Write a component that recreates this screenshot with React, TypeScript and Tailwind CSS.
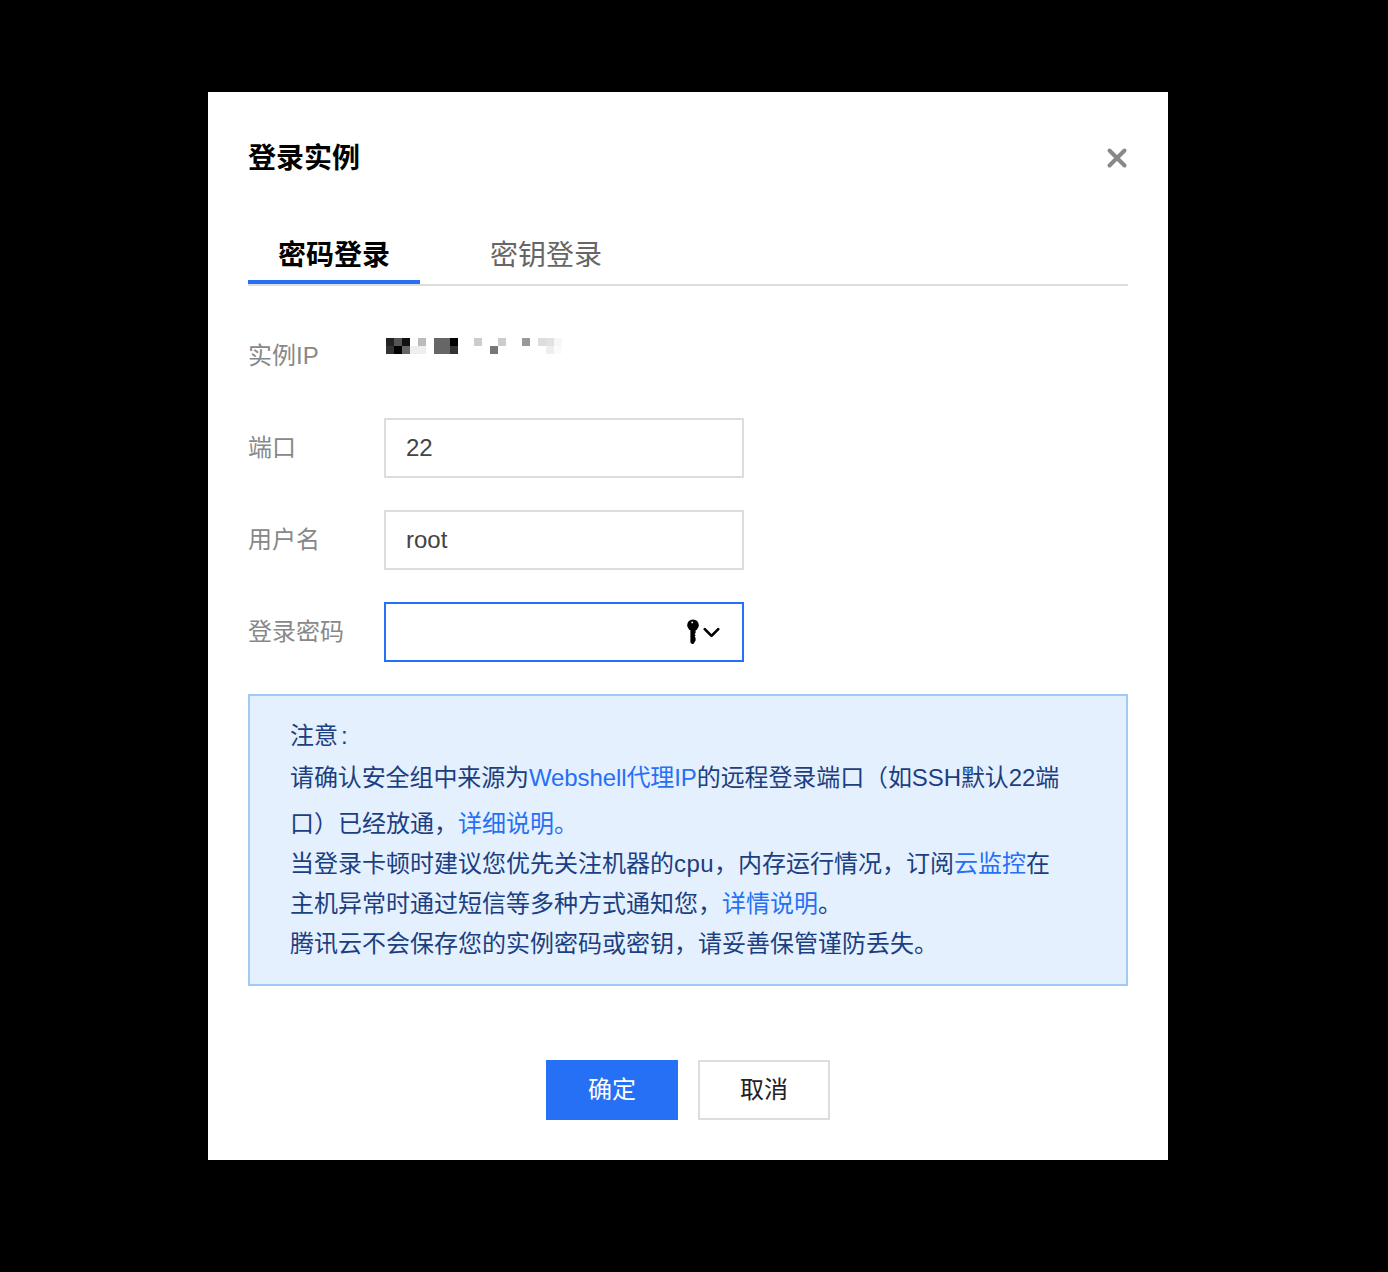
import { ChevronDown, X } from 'lucide-react';

const FONT = '[font-family:"Liberation_Sans","Noto_Sans_CJK_SC",sans-serif]';

const mosaic: [number, number, string][] = [
  [0, 0, '#222222'], [8, 0, '#555555'], [16, 0, '#111111'], [32, 0, '#bbbbbb'],
  [0, 8, '#333333'], [8, 8, '#000000'], [16, 8, '#666666'], [24, 8, '#eeeeee'], [32, 8, '#eeeeee'],
  [48, 0, '#666666'], [56, 0, '#666666'], [64, 0, '#000000'],
  [48, 8, '#666666'], [56, 8, '#666666'], [64, 8, '#333333'],
  [88, 0, '#cccccc'], [104, 8, '#777777'], [112, 0, '#cccccc'],
  [136, 0, '#999999'],
  [152, 0, '#dddddd'], [160, 0, '#e2e2e2'], [168, 0, '#f7f7f7'], [160, 8, '#eeeeee'], [168, 8, '#fbfbfb'],
];

function Link({ children }: { children: string }) {
  return <span className="text-[#2670f5]">{children}</span>;
}

function Field({ label, value }: { label: string; value: string }) {
  return (
    <div className="flex items-center">
      <div className="w-[136px] text-2xl leading-[40px] text-[#888888]">{label}</div>
      <div className="flex h-[60px] w-[360px] items-center border-2 border-[#dddddd] px-5 text-2xl text-[#444444]">
        {value}
      </div>
    </div>
  );
}

export default function App() {
  return (
    <div className={`flex h-[1272px] justify-center bg-black pr-3 pt-[92px] ${FONT}`}>
      <div className="flex h-[1068px] w-[960px] flex-col bg-white p-10">
        <div className="flex h-[52px] items-center justify-between">
          <h2 className="pt-[1px] text-[28px] font-bold text-black">登录实例</h2>
          <X size={30} strokeWidth={3.2} className="mr-[-4px] text-[#888888]" />
        </div>

        <div className="mt-[38px] flex h-[64px] border-b-2 border-[#dddddd] text-[28px]">
          <div className="flex h-[62px] w-[172px] items-start justify-center border-b-4 border-[#2670f5] pt-[14px] font-bold leading-[40px] text-black">
            密码登录
          </div>
          <div className="ml-[70px] pt-[14px] leading-[40px] text-[#666666]">密钥登录</div>
        </div>

        <div className="mt-[52px] flex h-[32px]">
          <div className="mt-[-2px] w-[136px] text-2xl leading-[40px] text-[#888888]">实例IP</div>
          <svg width="176" height="16" className="ml-[2px]" aria-hidden="true">
            {mosaic.map(([x, y, fill]) => (
              <rect key={`${x}-${y}`} x={x} y={y} width="8" height="8" fill={fill} />
            ))}
          </svg>
        </div>

        <div className="mt-[48px] flex flex-col gap-8">
          <Field label="端口" value="22" />
          <Field label="用户名" value="root" />
          <div className="flex items-center">
            <div className="w-[136px] text-2xl leading-[40px] text-[#888888]">登录密码</div>
            <div className="flex h-[60px] w-[360px] items-center justify-end border-2 border-[#2670f5] pr-[17px]">
              <svg width="14" height="26" viewBox="0 0 14 26" className="mr-[-2px]" aria-hidden="true">
                <circle cx="7" cy="6.2" r="5.8" fill="#000000" />
                <path d="M4.4 9h5.2v5l-1 1 1 1.4-1 1.2 1 1.4v2.6L7.4 25H6l-1.6-1.6z" fill="#000000" />
                <circle cx="6.2" cy="3.4" r="0.9" fill="#ffffff" />
              </svg>
              <ChevronDown size={27} strokeWidth={2.4} className="text-black" />
            </div>
          </div>
        </div>

        <div className="mt-8 h-[292px] border-2 border-[#a3c9fb] bg-[#e5f0ff] px-10 pb-5 pt-5 text-2xl leading-[40px] text-[#1b3f80]">
          <div>
            注意<span className="ml-[3px]">:</span>
          </div>
          <div className="mt-[2px] tracking-[-0.1px]">
            请确认安全组中来源为<Link>Webshell代理IP</Link>的远程登录端口（如SSH默认22端
          </div>
          <div className="mt-[6px]">
            口）已经放通，<Link>详细说明。</Link>
          </div>
          <div>
            当登录卡顿时建议您优先关注机器的<span className="tracking-[0.4px]">cpu</span>，内存运行情况，订阅<Link>云监控</Link>在
          </div>
          <div>
            主机异常时通过短信等多种方式通知您，<Link>详情说明</Link>。
          </div>
          <div>腾讯云不会保存您的实例密码或密钥，请妥善保管谨防丢失。</div>
        </div>

        <div className="mt-[74px] flex justify-center gap-5 text-2xl">
          <button className="h-[60px] w-[132px] bg-[#2670f5] text-white">确定</button>
          <button className="h-[60px] w-[132px] border-2 border-[#dddddd] bg-white text-[#222222]">取消</button>
        </div>
      </div>
    </div>
  );
}
